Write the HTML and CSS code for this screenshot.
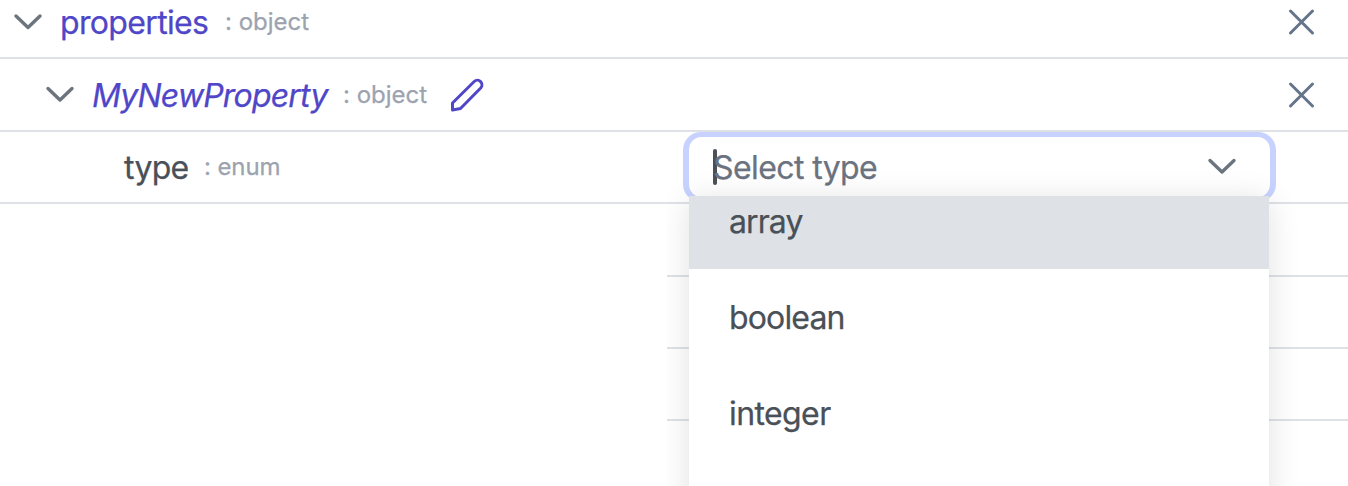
FILE: index.html
```html
<!DOCTYPE html>
<html lang="en">
<head>
<meta charset="utf-8">
<title>Schema editor</title>
<link rel="stylesheet" href="styles.css">
</head>
<body>
<main class="editor">
  <section class="row row-first">
    <svg class="chevron" viewBox="0 0 32 32"><path d="M4 10 16 21.5 28 10"/></svg>
    <span class="name name-properties">properties</span>
    <span class="kind">: object</span>
    <svg class="close" viewBox="0 0 28 28"><path d="M2.5 3 24.5 25M24.5 3 2.5 25"/></svg>
  </section>
  <section class="row row-nested">
    <svg class="chevron" viewBox="0 0 32 32"><path d="M4 9.5 16 21 28 9.5"/></svg>
    <span class="name name-custom">MyNewProperty</span>
    <span class="kind">: object</span>
    <svg class="pencil" viewBox="0 0 36 36"><path d="M3.5 33V26L25.2 4.5a4.6 4.6 0 0 1 6.5 6.5L11.5 31.5Z"/></svg>
    <svg class="close" viewBox="0 0 28 28"><path d="M2.5 3 24.5 25M24.5 3 2.5 25"/></svg>
  </section>
  <section class="row row-field">
    <span class="label">type</span>
    <span class="kind kind-enum">: enum</span>
    <div class="select">
      <span class="caret"></span>
      <span class="placeholder">Select type</span>
      <svg class="chevron" viewBox="0 0 32 32"><path d="M4 9.5 16 21 28 9.5"/></svg>
    </div>
  </section>
  <div class="values"><div class="value"></div><div class="value"></div><div class="value"></div></div>
  <div class="menu-area">
    <div class="menu">
      <div class="option option-active"><span class="array">array</span></div>
      <div class="option"><span class="boolean">boolean</span></div>
      <div class="option"><span class="integer">integer</span></div>
    </div>
  </div>
</main>
</body>
</html>
```
FILE: styles.css
```css
* { box-sizing: border-box; }
body { margin: 0; background: #fff; font-family: Inter, "Liberation Sans", sans-serif; color: #495057; overflow: hidden; }
.editor { position: relative; width: 1348px; height: 486px; overflow: hidden; display: flex; flex-direction: column; font-size: 32px; line-height: 40px; -webkit-text-stroke: 0.25px currentColor; }
.row { display: flex; align-items: center; flex: none; border-bottom: 2px solid #dee2e6; white-space: nowrap; }
.row-first { height: 59px; padding: 0 32px 13px 12px; }
.row-nested { height: 73px; padding: 0 32px 0 44px; }
.row-field { height: 72px; padding: 0 72px 0 124px; }
svg { flex: none; fill: none; stroke-linecap: round; stroke-linejoin: round; }
.chevron { width: 32px; height: 32px; stroke: #6c757d; stroke-width: 3.4; }
.close { width: 28px; height: 28px; margin-left: auto; stroke: #64748b; stroke-width: 3; }
.pencil { width: 36px; height: 36px; margin-left: 22px; stroke: #4f46c8; stroke-width: 3; }
.name { color: #4f46c8; margin-left: 16px; padding-top: 2px; }
.name-properties { width: 148px; letter-spacing: -0.65px; }
.name-custom { width: 235px; font-style: italic; letter-spacing: -0.82px; }
.kind { margin-left: 16px; font-size: 24px; color: #9ca3af; }
.name-properties + .kind { margin-left: 17px; }
.kind-enum { letter-spacing: -0.1px; }
.label { width: 64px; padding-top: 2px; letter-spacing: -0.7px; }
.select { align-self: flex-start; display: flex; align-items: center; width: 593px; height: 70px; margin-left: auto; padding: 0 32px 0 24px; background: #fff; border: solid #c7d2fe; border-width: 5px 6px; border-radius: 18px; flex: none; }
.caret { width: 4px; height: 36px; border-radius: 2px; background: #495057; }
.placeholder { margin-left: -4px; padding-top: 2px; color: #6b7280; letter-spacing: -0.6px; }
.select .chevron { margin-left: auto; }
.values { margin-left: 667px; }
.value { height: 72px; border-bottom: 2px solid #dee2e6; }
.value:first-child { height: 73px; }
/* Popup layer; its left edge clips the menu shadow. */
.menu-area { position: absolute; left: 667px; right: 0; top: 132px; bottom: 0; padding: 64px 79px 0 22px; overflow: hidden; }
.menu { height: 400px; background: #fff; box-shadow: 0 4px 30px rgba(0,0,0,.12); }
.option { height: 96px; padding: 29px 40px 0; }
.option-active { height: 73px; padding-top: 6px; background: #dee2e6; }
.array { letter-spacing: -0.9px; }
.boolean { letter-spacing: -0.85px; }
.integer { letter-spacing: -0.6px; }
```
